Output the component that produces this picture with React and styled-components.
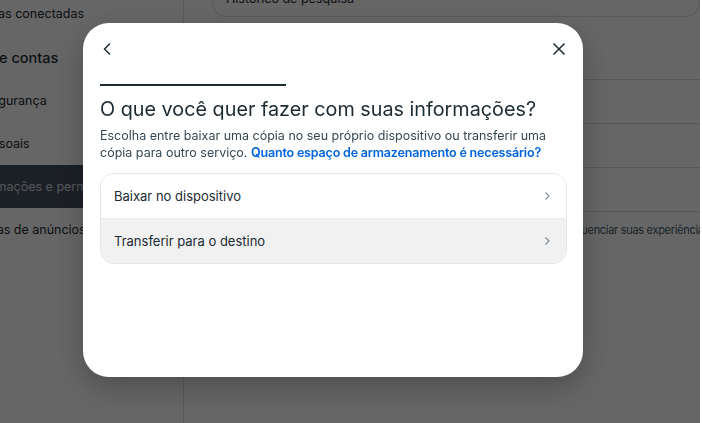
import React from "react";
import styled, { createGlobalStyle } from "styled-components";

const GlobalStyle = createGlobalStyle`
  html, body {
    margin: 0;
    padding: 0;
    background: #ffffff;
    font-family: Inter, "Noto Sans", sans-serif;
    color: #1c2b33;
  }
  #root {
    height: 423px;
    overflow: hidden;
  }
`

const Page = styled.div`
  display: flex;
  height: 423px;
  width: 700px;
  overflow: hidden;
  background: #ffffff;
`

const Sidebar = styled.nav`
  flex: 0 0 299px;
  margin-left: -116px;
  margin-top: -8px;
  border-right: 1px solid #dde1e4;
  display: flex;
  flex-direction: column;
`

const SideHeader = styled.div`
  font-size: 14.5px;
  font-weight: 500;
  height: 44px;
  display: flex;
  align-items: center;
  white-space: nowrap;
`

const SideItem = styled.div`
  font-size: 12.5px;
  height: 43px;
  display: flex;
  align-items: center;
  padding-left: ${p => p.$indent || 52}px;
  color: ${p => (p.$active ? "#d3d8dd" : "#1c2b33")};
  background: ${p => (p.$active ? "#44505d" : "transparent")};
  white-space: nowrap;
`

const Content = styled.main`
  flex: 1;
  padding: 0 0 0 28px;
  display: flex;
  flex-direction: column;
  overflow: hidden;
`

const TopCard = styled.div`
  box-sizing: border-box;
  margin-top: -20px;
  height: 37px;
  border: 1px solid #dde1e4;
  border-top: none;
  border-radius: 0 0 14px 14px;
  padding: 0 13px 9px;
  display: flex;
  align-items: flex-end;
  font-size: 12.5px;
  line-height: 16px;
`

const Rows = styled.div`
  margin-top: 62px;
  display: flex;
  flex-direction: column;
`

const Row = styled.div`
  box-sizing: border-box;
  height: 44px;
  border-top: 1px solid #d6dadd;
  padding: 10px 0 0 ${p => p.$indent || 18}px;
  font-size: 11px;
  letter-spacing: -0.3px;
  line-height: 16px;
  color: #465a69;
  white-space: nowrap;
`

const Overlay = styled.div`
  position: fixed;
  top: 0;
  left: 0;
  right: 2px;
  bottom: 0;
  background: rgba(0, 0, 0, 0.6);
  display: flex;
  align-items: flex-start;
  padding: 23px 0 0 83px;
`

const Modal = styled.div`
  width: 500px;
  height: 354px;
  box-sizing: border-box;
  background: #ffffff;
  border-radius: 26px;
  box-shadow: 0 10px 30px rgba(0, 0, 0, 0.25);
  padding: 0 16px 0 17px;
  display: flex;
  flex-direction: column;
`

const Header = styled.div`
  height: 52px;
  display: flex;
  align-items: center;
  justify-content: space-between;
`

const IconButton = styled.button`
  border: none;
  background: none;
  padding: 0;
  width: 16px;
  height: 16px;
  display: flex;
  align-items: center;
  justify-content: center;
  color: #1c2b33;
  cursor: pointer;
`

const Progress = styled.div`
  margin-top: 9px;
  height: 2px;
  width: 186px;
  background: #1c2b33;
`

const Title = styled.h2`
  margin: 11px 0 0;
  font-size: 19.8px;
  line-height: 24px;
  font-weight: 400;
  color: #1c2b33;
`

const Description = styled.p`
  margin: 6px 0 0;
  font-size: 12.5px;
  line-height: 17px;
  color: #344854;

  a {
    color: #0064e0;
    font-weight: 600;
    letter-spacing: -0.18px;
    text-decoration: none;
  }
`

const OptionList = styled.div`
  margin-top: 12px;
  border: 1px solid #e4e6e8;
  border-radius: 14px;
  overflow: hidden;
`

const Option = styled.div`
  height: 44px;
  display: flex;
  align-items: center;
  justify-content: space-between;
  padding: 0 14px 0 13px;
  font-size: 13px;
  color: #1c2b33;
  background: ${p => (p.$hover ? "#f1f1f1" : "#ffffff")};
  border-top: ${p => (p.$first ? "none" : "1px solid #e9eaeb")};
`

const Chevron = () => (
  <svg width="10" height="10" viewBox="0 0 10 10">
    <path d="M3.5 1.5 L7 5 L3.5 8.5" fill="none" stroke="#7c8a96" strokeWidth="1.1" />
  </svg>
)

const options = ["Baixar no dispositivo", "Transferir para o destino"]

const App = () => {
  return (
    <>
      <GlobalStyle />
      <Page>
        <Sidebar>
          <SideItem>Experiências conectadas</SideItem>
          <SideHeader>Configurações de contas</SideHeader>
          <SideItem $indent={49}>Senha e segurança</SideItem>
          <SideItem>Dados pessoais</SideItem>
          <SideItem $active>Suas informações e permissões</SideItem>
          <SideItem>Preferências de anúncios</SideItem>
        </Sidebar>
        <Content>
          <TopCard>Histórico de pesquisa</TopCard>
          <Rows>
            <Row />
            <Row />
            <Row />
            <Row $indent={141}>Gerencie as informações que usamos para influenciar suas experiências</Row>
          </Rows>
        </Content>
      </Page>
      <Overlay>
        <Modal>
          <Header>
            <IconButton aria-label="Voltar">
              <svg width="14" height="14" viewBox="0 0 14 14">
                <path d="M9 1.5 L3.5 7 L9 12.5" fill="none" stroke="#1c2b33" strokeWidth="1.5" />
              </svg>
            </IconButton>
            <IconButton aria-label="Fechar">
              <svg width="14" height="14" viewBox="0 0 14 14">
                <path d="M1.5 1.5 L12.5 12.5 M12.5 1.5 L1.5 12.5" fill="none" stroke="#1c2b33" strokeWidth="1.5" />
              </svg>
            </IconButton>
          </Header>
          <Progress />
          <Title>O que você quer fazer com suas informações?</Title>
          <Description>
            Escolha entre baixar uma cópia no seu próprio dispositivo ou transferir uma
            cópia para outro serviço. <a href="#">Quanto espaço de armazenamento é necessário?</a>
          </Description>
          <OptionList>
            {options.map((label, i) => (
              <Option key={label} $first={i === 0} $hover={i === 1}>
                {label}
                <Chevron />
              </Option>
            ))}
          </OptionList>
        </Modal>
      </Overlay>
    </>
  )
}

export default App;
